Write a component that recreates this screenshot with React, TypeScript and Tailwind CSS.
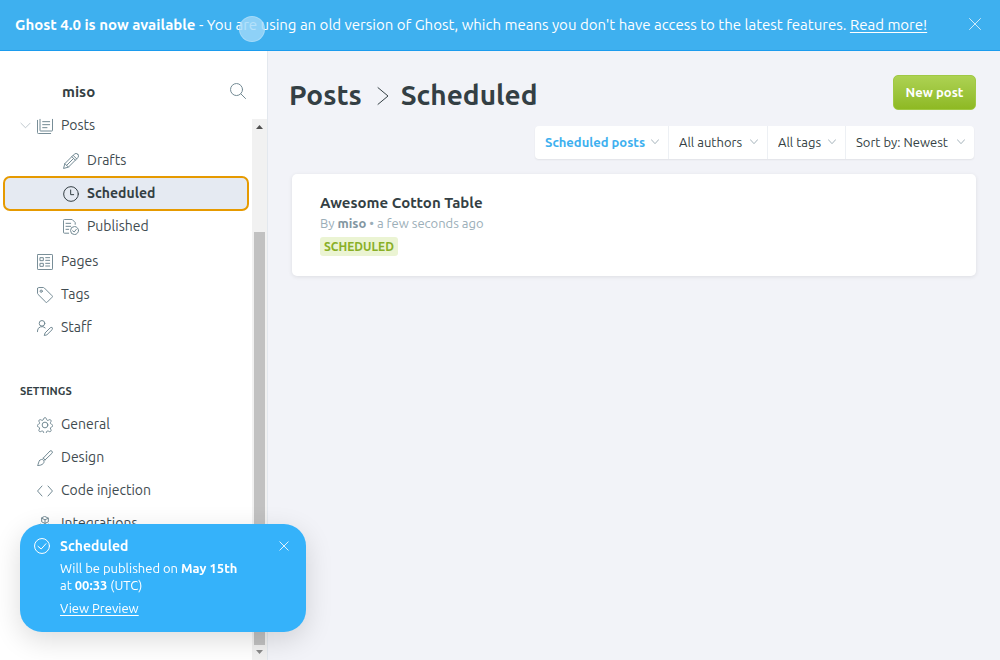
import type { ReactNode } from "react";

function Icon({ children, className = "size-4" }: { children: ReactNode; className?: string }) {
  return (
    <svg
      viewBox="0 0 24 24"
      fill="none"
      stroke="currentColor"
      strokeWidth="1.5"
      strokeLinecap="round"
      strokeLinejoin="round"
      aria-hidden="true"
      className={`shrink-0 ${className}`}
    >
      {children}
    </svg>
  );
}

const icons = {
  posts: (
    <>
      <path d="M4.500 2v16.700a.8.8 0 0 0 .8.8h17.200a.8.8 0 0 0 .8-.8V2" />
      <path d="M20.500 23.300H2.200A1.500 1.500 0 0 1 .7 21.800V3.500M8.500 5.500h10.500M8.500 10h10.500M8.500 14.500h6.500" />
    </>
  ),
  drafts: (
    <>
      <path d="M22.200 1.800a3.700 3.700 0 0 0-5.300 0L2.800 15.900.8 23.200l7.300-2L22.200 7.100a3.700 3.700 0 0 0 0-5.300z" />
      <path d="M15.200 3.500l5.300 5.300M13.200 5.500l5.300 5.300M2.800 15.900l5.300 5.300M15.800 8.200L5.500 18.500" />
    </>
  ),
  scheduled: (
    <>
      <circle cx="12" cy="12" r="11" />
      <path d="M11.500 6v7H16" />
    </>
  ),
  published: (
    <>
      <path d="M8.500 21.300H2.200A1.500 1.500 0 0 1 .7 19.800V2.200A1.500 1.500 0 0 1 2.200.7h11.500l4.600 4.600V8" />
      <path d="M4.500 6.500h7M4.500 11h7M4.500 15.500h4" />
      <circle cx="17.300" cy="17.300" r="6" />
      <path d="M20 15.500l-3.200 4-2.300-1.800" />
    </>
  ),
  pages: (
    <>
      <rect x=".7" y=".7" width="22.600" height="22.600" rx="1" />
      <path d="M5 5.500h4.500V10H5zM5 14h4.500v4.500H5zM13 5.500h6M13 9.500h6M13 14h6M13 18h6" />
    </>
  ),
  tags: (
    <>
      <path d="M.8 2.300v7.200a2 2 0 0 0 .6 1.400l11.800 11.800a1.500 1.500 0 0 0 2.100 0l7.400-7.400a1.500 1.500 0 0 0 0-2.100L10.900 1.400A2 2 0 0 0 9.500.8H2.300A1.500 1.500 0 0 0 .8 2.300z" />
      <circle cx="6.300" cy="6.300" r="1.700" />
    </>
  ),
  staff: (
    <>
      <circle cx="7.500" cy="5" r="4.200" />
      <path d="M.7 17.500v-1a6.800 6.800 0 0 1 11.600-4.700" />
      <path d="M22.700 11.700a2 2 0 0 0-2.900 0l-7.700 7.700-1.200 3.900 4-1.100 7.800-7.700a2 2 0 0 0 0-2.800z" />
    </>
  ),
  general: (
    <>
      <circle cx="12" cy="12" r="4.300" />
      <path d="M10.100 2.300a2 2 0 0 1 3.800 0l.4 1.400a2 2 0 0 0 2.800 1.100l1.300-.7a2 2 0 0 1 2.600 2.700l-.7 1.200a2 2 0 0 0 1.100 2.800l.8.300a2 2 0 0 1 0 3.800l-.8.300a2 2 0 0 0-1.100 2.800l.7 1.200a2 2 0 0 1-2.600 2.700l-1.300-.7a2 2 0 0 0-2.800 1.100l-.4 1.400a2 2 0 0 1-3.800 0l-.4-1.400a2 2 0 0 0-2.800-1.100l-1.300.7a2 2 0 0 1-2.600-2.700l.7-1.200a2 2 0 0 0-1.100-2.800l-.8-.3a2 2 0 0 1 0-3.800l.8-.3a2 2 0 0 0 1.100-2.800L3 6.800a2 2 0 0 1 2.600-2.700l1.300.7a2 2 0 0 0 2.800-1.100z" />
    </>
  ),
  design: (
    <>
      <path d="M9.300 12.200L19.500 1.500a2.300 2.300 0 0 1 3.200 3.200L12 15" />
      <path d="M9.300 12.200a4 4 0 0 1 2.700 2.800M4 15.500c1.500-1.700 4.200-1.700 5.500-.5 1.400 1.300 1.400 3.800 0 5.200-2 2.200-5.500 3.200-8.700 3 1.500-2 1.200-5.300 3.200-7.700z" />
    </>
  ),
  code: <path d="M7.500 4.500L.8 12l6.700 7.500M16.500 4.500l6.700 7.500-6.700 7.500" />,
  integrations: (
    <>
      <path d="M12 .8l5 2.500v5.400l-5 2.500-5-2.500V3.300zM7 3.300l5 2.400 5-2.400M12 5.700v5.500" />
      <path d="M6 12.500l5 2.500v5.400l-5 2.500-5-2.500V15zM18 12.500l5 2.500v5.400l-5 2.500-5-2.500V15zM1 15l5 2.500 5-2.500M6 17.500v5.400M13 15l5 2.500 5-2.500M18 17.500v5.400" />
    </>
  ),
  chevronDown: <path d="M2 7l10 10L22 7" />,
  close: <path d="M1 1l22 22M23 1L1 23" />,
};

type IconName = keyof typeof icons;

function NavLink({ icon, label, nested, active }: { icon: IconName; label: string; nested?: boolean; active?: boolean }) {
  return (
    <a
      href="#"
      aria-current={active ? "page" : undefined}
      className={`mx-1 flex h-[33px] items-center gap-2 rounded-md ${nested ? "pl-[59px]" : "pl-[33px]"} ${
        active
          ? "bg-[#e5eaf2] font-bold text-[#343f44] outline-2 -outline-offset-1 outline-[#e69a00]"
          : "text-[#3f4b50]"
      }`}
    >
      <Icon className={active ? "size-4 text-[#343f44]" : "size-4 text-[#738a94]"}>{icons[icon]}</Icon>
      {label}
    </a>
  );
}

function Sidebar() {
  return (
    <aside className="flex w-[268px] shrink-0 flex-col border-r border-[#e3e8ee] bg-white">
      <div className="flex h-[62px] shrink-0 items-center justify-between pt-[18px] pr-[21px] pl-[62px]">
        <span className="pt-[2px] text-[15px] font-bold text-[#343f44]">miso</span>
        <button type="button" aria-label="Search" className="text-[#738a94]">
          <Icon className="size-4">
            <circle cx="9.800" cy="9.800" r="9" />
            <path d="M16.300 16.300l7 7" />
          </Icon>
        </button>
      </div>
      <div className="flex min-h-0 flex-1">
        <nav className="min-w-0 flex-1 overflow-hidden text-[14px]">
          <div className="-mt-1 flex items-center">
            <button type="button" aria-label="Collapse posts" className="-mr-[31px] ml-5 text-[#a3b1b8]">
              <Icon className="size-[11px]">{icons.chevronDown}</Icon>
            </button>
            <a href="#" className="flex h-[33px] flex-1 items-center gap-2 pl-[37px] text-[#3f4b50]">
              <Icon className="size-4 text-[#738a94]">{icons.posts}</Icon>
              Posts
            </a>
          </div>
          <div className="my-[2px]">
            <NavLink nested icon="drafts" label="Drafts" />
            <NavLink nested active icon="scheduled" label="Scheduled" />
            <NavLink nested icon="published" label="Published" />
          </div>
          <NavLink icon="pages" label="Pages" />
          <NavLink icon="tags" label="Tags" />
          <NavLink icon="staff" label="Staff" />
          <h2 className="mt-[39px] mb-[9px] pl-5 text-[11px] leading-4 font-semibold text-[#343f44]">SETTINGS</h2>
          <NavLink icon="general" label="General" />
          <NavLink icon="design" label="Design" />
          <NavLink icon="code" label="Code injection" />
          <NavLink icon="integrations" label="Integrations" />
        </nav>
        <div className="mt-[6px] flex w-[15px] shrink-0 flex-col items-center bg-[#f1f1f1]" aria-hidden="true">
          <svg viewBox="0 0 15 15" className="size-[15px] shrink-0 fill-[#505050]">
            <path d="M4 10L7.500 6 11 10z" />
          </svg>
          <div className="mt-[98px] w-[11px] flex-1 bg-[#c1c1c1]" />
          <svg viewBox="0 0 15 15" className="size-[15px] shrink-0 fill-[#8a8a8a]">
            <path d="M4 5h7L7.500 9z" />
          </svg>
        </div>
      </div>
    </aside>
  );
}

function Filter({ label, value, className }: { label: string; value: string; className: string }) {
  return (
    <div className={`grid items-center ${className}`}>
      <select
        aria-label={label}
        className="col-start-1 row-start-1 h-[33px] w-full appearance-none bg-transparent pr-5 pl-[10px]"
      >
        <option>{value}</option>
      </select>
      <Icon className="pointer-events-none col-start-1 row-start-1 mr-[9px] mb-px size-2 justify-self-end text-[#93a4ad]">
        <path strokeWidth="2.500" d="M1 5l11 12L23 5" />
      </Icon>
    </div>
  );
}

function Toast() {
  return (
    <div
      role="status"
      className="fixed bottom-7 left-5 flex w-[286px] items-start rounded-[22px] bg-[#35b2fa] pt-3 pr-[17px] pb-[15px] pl-[14px] text-[13px] leading-[17px] text-white shadow-[0_8px_28px_rgba(0,0,0,0.14)]"
    >
      <Icon className="mt-[2px] mr-[10px] size-4">
        <circle cx="12" cy="12" r="11.200" />
        <path d="M18 8.500l-7.200 8-4.800-4" />
      </Icon>
      <div className="flex-1">
        <h3 className="mb-[4px] text-[14px] leading-5 font-bold">Scheduled</h3>
        <p>
          Will be published on <b>May 15th</b>
          <br />
          at <b>00:33</b> (UTC)
        </p>
        <a href="#" className="mt-[6px] inline-block underline underline-offset-2">
          View Preview
        </a>
      </div>
      <button type="button" aria-label="Close notification" className="mt-[5px]">
        <Icon className="size-[10px]">
          <path strokeWidth="2" d="M2 2l20 20M22 2L2 22" />
        </Icon>
      </button>
    </div>
  );
}

export default function App() {
  return (
    <div className="flex h-screen flex-col overflow-hidden bg-[#f2f3f8] font-['Ubuntu','Noto_Sans',sans-serif] text-[#343f44]">
      <div className="flex h-[51px] shrink-0 items-center justify-between border-b border-[#1c9cee] bg-[#3eb0ef] pr-[19px] pl-[15px] text-[15px] text-white">
        <p>
          <b>Ghost 4.0 is now available</b> - You are using an old version of Ghost, which means you don't have access
          to the latest features.{" "}
          <a href="#" className="underline underline-offset-2">
            Read more!
          </a>
        </p>
        <button type="button" aria-label="Dismiss" className="-mt-[2px]">
          <Icon className="size-3">{icons.close}</Icon>
        </button>
      </div>
      <div className="flex min-h-0 flex-1">
        <Sidebar />
        <main className="min-w-0 flex-1">
          <header className="flex items-start justify-between pt-6 pr-6 pl-[21px]">
            <h1 className="flex items-center text-[28px] leading-[39px] font-bold">
              <a href="#">Posts</a>
              <Icon className="mt-[3px] mr-2 ml-[11px] size-5">
                <path strokeWidth="1.200" d="M6 2L18 12 6 22" />
              </Icon>
              Scheduled
            </h1>
            <button
              type="button"
              className="h-[35px] w-[83px] rounded-[5px] border border-[#a0c944] bg-gradient-to-b from-[#add252] to-[#8eb922] text-[13px] font-semibold text-white"
            >
              New post
            </button>
          </header>
          <div className="mt-3 flex justify-end pr-[26px] text-[13px]">
            <div className="flex divide-x divide-[#edf0f4] rounded bg-white shadow-[0_1px_2px_rgba(0,0,0,0.07)]">
              <Filter label="Post type" value="Scheduled posts" className="w-[134px] font-semibold text-[#3eb0ef]" />
              <Filter label="Author" value="All authors" className="w-[99px]" />
              <Filter label="Tag" value="All tags" className="w-[78px]" />
              <Filter label="Sort" value="Sort by: Newest" className="w-[128px]" />
            </div>
          </div>
          <section className="px-6 pt-[15px]">
            <article className="rounded-[5px] bg-white px-7 pt-[18px] pb-5 shadow-[0_1px_4px_rgba(0,0,0,0.09)]">
              <h3 className="text-[15px] leading-[22px] font-bold">Awesome Cotton Table</h3>
              <p className="text-[13px] leading-[19px] text-[#9baeb8]">
                By <b className="font-semibold text-[#8296a1]">miso</b> • a few seconds ago
              </p>
              <span className="mt-1 block w-fit rounded-[3px] bg-[#ebf4d3] px-1 text-[12px] leading-[19px] font-semibold text-[#89af26]">
                SCHEDULED
              </span>
            </article>
          </section>
        </main>
      </div>
      <Toast />
      <div
        aria-hidden="true"
        className="pointer-events-none fixed top-4 left-[239px] size-[26px] rounded-full border border-white/20 bg-[#a3d9f9]/80"
      />
    </div>
  );
}
